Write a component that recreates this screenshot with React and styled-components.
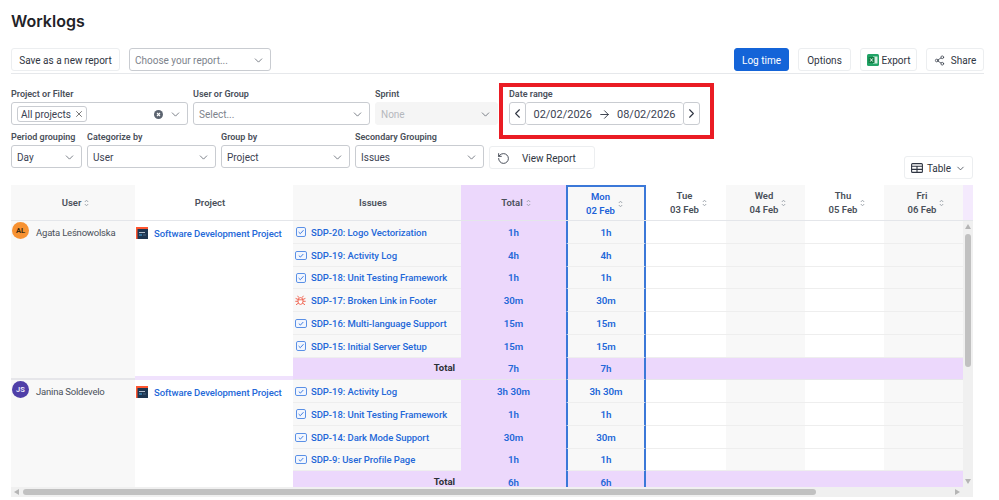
import styled, { createGlobalStyle } from 'styled-components'
import { ChevronDown, ChevronLeft, ChevronRight, ArrowRight, Share2, RotateCcw, X } from 'lucide-react'

const GlobalStyle = createGlobalStyle`
  html, body { margin: 0; padding: 0; background: #fff; }
  body {
    font-family: Roboto, "Noto Sans", sans-serif;
    font-size: 10px;
    color: #3b4252;
    overflow: hidden;
  }
  svg { flex: none; }
`

const COLUMNS = '124px 158px 168px 105px 80px 80px 79px 79px 79px'
const ROW = 22.75

const groups = [
  {
    user: 'Agata Leśnowolska',
    initials: 'AL',
    color: '#f79232',
    ink: '#3b2a10',
    total: '7h',
    issues: [
      { name: 'SDP-20: Logo Vectorization', time: '1h' },
      { name: 'SDP-19: Activity Log', time: '4h', wide: true },
      { name: 'SDP-18: Unit Testing Framework', time: '1h' },
      { name: 'SDP-17: Broken Link in Footer', time: '30m', bug: true },
      { name: 'SDP-16: Multi-language Support', time: '15m', wide: true },
      { name: 'SDP-15: Initial Server Setup', time: '15m' },
    ],
  },
  {
    user: 'Janina Soldevelo',
    initials: 'JS',
    color: '#4f3fa8',
    ink: '#e8e4f8',
    total: '6h',
    issues: [
      { name: 'SDP-19: Activity Log', time: '3h 30m', wide: true },
      { name: 'SDP-18: Unit Testing Framework', time: '1h' },
      { name: 'SDP-14: Dark Mode Support', time: '30m', wide: true },
      { name: 'SDP-9: User Profile Page', time: '1h', wide: true },
    ],
  },
]

const days = [
  { day: 'Tue', date: '03 Feb' },
  { day: 'Wed', date: '04 Feb', shaded: true },
  { day: 'Thu', date: '05 Feb' },
  { day: 'Fri', date: '06 Feb', shaded: true },
]

export default function App() {
  return (
    <Page>
      <GlobalStyle />
      <Title>Worklogs</Title>
      <Toolbar>
        <Button $width={109}>Save as a new report</Button>
        <SelectBox $width={142} $muted>
          Choose your report...
          <Caret />
        </SelectBox>
        <ToolbarRight>
          <PrimaryButton>Log time</PrimaryButton>
          <Button $width={53}>Options</Button>
          <Button $width={57} $gap={3}>
            <ExcelIcon />
            Export
          </Button>
          <Button $width={58} $gap={6}>
            <Share2 size={11} strokeWidth={1.6} color="#2f3542" />
            Share
          </Button>
        </ToolbarRight>
      </Toolbar>

      <FilterRow>
        <Field>
          <Label>Project or Filter</Label>
          <SelectBox $width={177}>
            <Chip>
              All projects
              <X size={10} strokeWidth={1.6} color="#333" />
            </Chip>
            <ClearIcon />
            <Caret tight />
          </SelectBox>
        </Field>
        <Field>
          <Label>User or Group</Label>
          <SelectBox $width={177} $muted>
            Select...
            <Caret />
          </SelectBox>
        </Field>
        <Field>
          <Label>Sprint</Label>
          <DisabledBox>
            None
            <Caret />
          </DisabledBox>
        </Field>
        <DateField>
          <Highlight />
          <Label>Date range</Label>
          <DateControls>
            <DateStep>
              <ChevronLeft size={15} strokeWidth={1.7} color="#2f3542" />
            </DateStep>
            <DateValue>
              02/02/2026
              <ArrowRight size={13} strokeWidth={1.7} color="#2f3542" />
              08/02/2026
            </DateValue>
            <DateStep>
              <ChevronRight size={15} strokeWidth={1.7} color="#2f3542" />
            </DateStep>
          </DateControls>
        </DateField>
      </FilterRow>

      <GroupingRow>
        <Field>
          <Label>Period grouping</Label>
          <SelectBox $width={71}>
            Day
            <Caret />
          </SelectBox>
        </Field>
        <Field>
          <Label>Categorize by</Label>
          <SelectBox $width={129}>
            User
            <Caret />
          </SelectBox>
        </Field>
        <Field>
          <Label>Group by</Label>
          <SelectBox $width={129}>
            Project
            <Caret />
          </SelectBox>
        </Field>
        <Field>
          <Label>Secondary Grouping</Label>
          <SelectBox $width={129}>
            Issues
            <Caret />
          </SelectBox>
        </Field>
        <ViewReport>
          <RotateCcw size={13} strokeWidth={1.6} color="#2f3542" />
          View Report
        </ViewReport>
        <TableToggle>
          <TableIcon />
          Table
          <ChevronDown size={11} strokeWidth={1.6} color="#2f3542" />
        </TableToggle>
      </GroupingRow>

      <TableFrame>
        <HeaderRow>
          <HeadCell $shaded>
            User
            <SortIcon />
          </HeadCell>
          <HeadCell $offset={8}>Project</HeadCell>
          <HeadCell $shaded $offset={8}>Issues</HeadCell>
          <HeadCell $total>
            Total
            <SortIcon />
          </HeadCell>
          <HeadCell $shaded $today $offset={8}>
            <DayLabel $today>
              <span>Mon</span>
              <span>02 Feb</span>
            </DayLabel>
            <SortIcon />
          </HeadCell>
          {days.map(d => (
            <HeadCell key={d.day} $shaded={d.shaded}>
              <DayLabel>
                <span>{d.day}</span>
                <span>{d.date}</span>
              </DayLabel>
              <SortIcon />
            </HeadCell>
          ))}
        </HeaderRow>
        <HeaderEnd />

        <Body>
          {groups.map(group => (
            <Group key={group.user} $rows={group.issues.length + 1}>
              <UserCell $rows={group.issues.length + 1}>
                <Avatar $color={group.color} $ink={group.ink}>{group.initials}</Avatar>
                {group.user}
              </UserCell>
              <ProjectCell $rows={group.issues.length + 1}>
                <ProjectIcon />
                <IssueLink>Software Development Project</IssueLink>
              </ProjectCell>
              {group.issues.map(issue => (
                <IssueRow key={issue.name} issue={issue} />
              ))}
              <TotalLabel>Total</TotalLabel>
              <TotalValue>{group.total}</TotalValue>
              <TotalValue $today>{group.total}</TotalValue>
              <TotalValue />
              <TotalValue />
              <TotalValue />
              <TotalValue />
            </Group>
          ))}
        </Body>

        <VerticalBar>
          <Arrow $dir="up" />
          <VerticalThumb />
          <Arrow $dir="down" />
        </VerticalBar>
        <HorizontalBar>
          <Arrow $dir="left" />
          <HorizontalThumb />
          <Arrow $dir="right" />
        </HorizontalBar>
      </TableFrame>
    </Page>
  )
}

function IssueRow({ issue }) {
  return (
    <>
      <IssueCell>
        {issue.bug ? <BugIcon /> : <TaskIcon wide={issue.wide} />}
        <IssueLink>{issue.name}</IssueLink>
      </IssueCell>
      <TimeCell $total>{issue.time}</TimeCell>
      <TimeCell $today $shaded>{issue.time}</TimeCell>
      <TimeCell />
      <TimeCell $shaded />
      <TimeCell />
      <TimeCell $shaded />
    </>
  )
}

const Caret = ({ tight }) => (
  <CaretSlot $tight={tight}>
    <ChevronDown size={13} strokeWidth={1.4} color="#555b66" />
  </CaretSlot>
)

const SortIcon = () => (
  <SortSlot>
    <svg width="5" height="8" viewBox="0 0 5 8">
      <path d="M.8 3 2.5 1.2 4.2 3M.8 5 2.5 6.8 4.2 5" fill="none" stroke="#9aa0a8" strokeWidth=".9" />
    </svg>
  </SortSlot>
)

const ClearIcon = () => (
  <ClearSvg width="9" height="9" viewBox="0 0 9 9">
    <circle cx="4.5" cy="4.5" r="4.5" fill="#5c6470" />
    <path d="M3 3l3 3M6 3 3 6" stroke="#fff" strokeWidth="1.1" />
  </ClearSvg>
)

const ExcelIcon = () => (
  <svg width="12" height="12" viewBox="0 0 12 12">
    <rect width="12" height="12" rx="1.5" fill="#21a366" />
    <rect x="6" y="2.5" width="4.5" height="7" fill="#d5f0e2" />
    <rect x="1.5" y="3" width="6" height="6" rx=".6" fill="#107c41" />
    <path d="M3.2 4.4 5.8 7.6M5.8 4.4 3.2 7.6" stroke="#fff" strokeWidth=".9" />
  </svg>
)

const TableIcon = () => (
  <svg width="12" height="10" viewBox="0 0 12 10">
    <rect x=".6" y=".6" width="10.8" height="8.8" rx="1" fill="none" stroke="#2f3542" strokeWidth="1.1" />
    <path d="M.6 3.3h10.8M.6 6.4h10.8M6 3.3v6" fill="none" stroke="#2f3542" strokeWidth="1.1" />
  </svg>
)

const TaskIcon = ({ wide }) => (
  <IconSlot>
    <svg width={wide ? 12 : 10} height={wide ? 9 : 10} viewBox={wide ? '0 0 12 9' : '0 0 10 10'}>
      <rect x=".5" y=".5" width={wide ? 11 : 9} height={wide ? 8 : 9} rx="1.4" fill="#f2f6fe" stroke="#5a90e6" />
      <path d={wide ? 'M3.8 4.6 5.4 6.1 8.3 3' : 'M2.6 5 4.3 6.7 7.5 3.2'} fill="none" stroke="#2f72dc" strokeWidth=".9" />
    </svg>
  </IconSlot>
)

const BugIcon = () => (
  <IconSlot>
    <svg width="11" height="11" viewBox="0 0 11 11">
      <ellipse cx="5.5" cy="6" rx="2.6" ry="3.4" fill="#fff" stroke="#ee5a46" strokeWidth=".9" />
      <path
        d="M3.8 2.6 2.6.8M7.2 2.6 8.4.8M3 4.4.6 3.4M8 4.4l2.4-1M2.9 6.3H.3M8.1 6.3h2.6M3.3 8.2 1 9.8M7.7 8.2 10 9.8M3 4.8h5"
        fill="none"
        stroke="#ee5a46"
        strokeWidth=".9"
      />
    </svg>
  </IconSlot>
)

const ProjectIcon = () => (
  <svg width="12" height="12" viewBox="0 0 12 12">
    <rect width="12" height="12" fill="#ff5630" />
    <rect x="1.5" y="2" width="10.5" height="10" fill="#1d3550" />
    <path d="M3 5.5h6" stroke="#d8e2ee" strokeWidth=".8" />
    <path d="M3 8h3" stroke="#4bb0e8" strokeWidth="1" />
    <path d="M7 8h3" stroke="#4a6480" strokeWidth="1" />
  </svg>
)

const Page = styled.div`
  height: 500px;
  overflow: hidden;
  padding: 0 15px 0 11px;
  box-sizing: border-box;
`

const Title = styled.h1`
  margin: 0;
  height: 48px;
  padding-top: 10px;
  box-sizing: border-box;
  font-family: "Inter", "Liberation Sans", sans-serif;
  font-size: 16px;
  line-height: 22px;
  font-weight: 600;
  color: #1f2328;
`

const Toolbar = styled.div`
  display: flex;
  gap: 9px;
  height: 26px;
  padding-bottom: 2px;
  border-bottom: 1px solid #e6e8eb;
  box-sizing: border-box;
`

const ToolbarRight = styled.div`
  display: flex;
  gap: 9px;
  margin-left: auto;
`

const Button = styled.button`
  display: inline-flex;
  align-items: center;
  justify-content: center;
  gap: ${p => p.$gap || 4}px;
  ${p => (p.$width ? `width: ${p.$width}px;` : '')}
  height: 23px;
  padding: 1px 0 0;
  box-sizing: border-box;
  border: 1px solid #eceef0;
  border-radius: 3px;
  background: #fff;
  font: inherit;
  white-space: nowrap;
  color: #2f3542;
`

const PrimaryButton = styled(Button)`
  width: 55px;
  border-color: #1464d8;
  background: #1464d8;
  color: #fff;
`

const SelectBox = styled.div`
  display: flex;
  align-items: center;
  width: ${p => p.$width}px;
  height: 23px;
  padding: 1px 0 0 5px;
  box-sizing: border-box;
  border: 1px solid #c9ccd1;
  border-radius: 3px;
  background: #fff;
  white-space: nowrap;
  color: ${p => (p.$muted ? '#7d838c' : '#3b4252')};
`

const CaretSlot = styled.span`
  display: inline-flex;
  margin-left: ${p => (p.$tight ? '6px' : 'auto')};
  margin-right: 5.5px;
`

const Chip = styled.span`
  display: inline-flex;
  align-items: center;
  gap: 3px;
  height: 14px;
  padding: 0 2px 0 3px;
  border: 1px solid #c9ccd1;
  border-radius: 3px;
  color: #3b4252;
`

const ClearSvg = styled.svg`
  margin-left: auto;
`

const FilterRow = styled.div`
  display: flex;
  gap: 5px;
  height: 38px;
  margin-top: 13px;
`

const GroupingRow = styled.div`
  display: flex;
  gap: 5px;
  height: 49px;
  margin-top: 5px;
  padding-right: 11px;
`

const Field = styled.div`
  display: flex;
  flex-direction: column;
`

const Label = styled.label`
  height: 13px;
  margin-bottom: 2px;
  font-size: 9px;
  line-height: 15px;
  font-weight: 600;
  color: #4a505a;
  white-space: nowrap;
`

const DisabledBox = styled(SelectBox)`
  width: 123px;
  border-color: #f5f5f5;
  background: #f5f5f5;
  color: #b5b8bd;
`

const DateField = styled(Field)`
  position: relative;
  margin-left: 6px;
`

const Highlight = styled.div`
  position: absolute;
  top: -4px;
  left: -10px;
  width: 215px;
  height: 56px;
  box-sizing: border-box;
  border: 4px solid #ea1c24;
  pointer-events: none;
`

const DateControls = styled.div`
  display: flex;
  height: 24px;
`

const DateStep = styled.div`
  display: flex;
  align-items: center;
  justify-content: center;
  width: 17px;
  box-sizing: border-box;
  border: 1px solid #c9ccd1;
  border-radius: 3px;
`

const DateValue = styled.div`
  display: flex;
  align-items: center;
  justify-content: center;
  gap: 6px;
  width: 157px;
  padding-top: 1px;
  box-sizing: border-box;
  border: 1px solid #c9ccd1;
  border-left: 0;
  border-right: 0;
  border-radius: 3px;
  font-size: 11px;
  color: #3b4252;
`

const ViewReport = styled(Button)`
  align-self: flex-start;
  width: 106px;
  margin-top: 16px;
  padding-left: 7px;
  justify-content: flex-start;
  gap: 12px;
`

const TableToggle = styled(Button)`
  align-self: flex-end;
  width: 69px;
  margin-left: auto;
`

const TableFrame = styled.div`
  display: grid;
  grid-template-columns: 952px 10px;
  grid-template-rows: 36px 266px 10px;
  width: 962px;
  margin-top: 6px;
`

const HeaderRow = styled.div`
  display: grid;
  grid-template-columns: ${COLUMNS};
  border-bottom: 1px solid #e4e6ea;
`

const HeaderEnd = styled.div`
  background: #f4eafd;
  border-bottom: 1px solid #e4e6ea;
`

const HeadCell = styled.div`
  display: flex;
  align-items: center;
  justify-content: center;
  padding-right: ${p => p.$offset || 0}px;
  box-sizing: border-box;
  font-size: 9.5px;
  font-weight: 600;
  color: #4a505a;
  background: ${p => (p.$total ? '#ecd8fc' : p.$shaded ? '#f8f8f8' : '#fff')};
  ${p => (p.$today ? 'border: 2px solid #3b78d8; border-bottom: 0;' : '')}
`

const SortSlot = styled.span`
  display: inline-flex;
  width: 0;
  margin-left: 3px;
`

const DayLabel = styled.div`
  display: flex;
  flex-direction: column;
  align-items: center;
  padding-top: 1px;
  line-height: 14px;
  color: ${p => (p.$today ? '#1d62d8' : '#4a505a')};
`

const Body = styled.div`
  overflow: hidden;
`

const Group = styled.div`
  display: grid;
  grid-template-columns: ${COLUMNS};
  grid-template-rows: repeat(${p => p.$rows}, ${ROW}px);
`

const UserCell = styled.div`
  grid-row: 1 / span ${p => p.$rows};
  display: flex;
  align-items: flex-start;
  gap: 7px;
  padding: 1px 0 0 1px;
  box-sizing: border-box;
  font-size: 9.5px;
  letter-spacing: -0.2px;
  line-height: 21px;
  color: #4a505a;
  background: #f8f8f8;
  border-bottom: 2px solid #e6e6ea;
`

const Avatar = styled.span`
  display: flex;
  align-items: center;
  justify-content: center;
  flex: none;
  width: 17px;
  height: 17px;
  border-radius: 50%;
  font-size: 7.5px;
  letter-spacing: 0;
  line-height: 17px;
  font-weight: 700;
  background: ${p => p.$color};
  color: ${p => p.$ink};
`

const ProjectCell = styled.div`
  grid-row: 1 / span ${p => p.$rows};
  display: flex;
  align-items: flex-start;
  gap: 6px;
  padding: 5.5px 0 0 1px;
  box-sizing: border-box;
  line-height: 13px;
  background: #fff;
  border-bottom: 4px solid #f0e2fd;
`

const IssueLink = styled.a`
  color: #2468d8;
  font-size: 9.5px;
  letter-spacing: -0.05px;
  font-weight: 500;
  line-height: 13px;
  white-space: nowrap;
`

const IssueCell = styled.div`
  display: flex;
  align-items: center;
  box-sizing: border-box;
  padding: 1px 0 0 1px;
  background: #f8f8f8;
  border-bottom: 1px solid #eeeeee;
`

const IconSlot = styled.span`
  display: inline-flex;
  justify-content: center;
  width: 13px;
  margin-right: 4px;
`

const TimeCell = styled.div`
  display: flex;
  align-items: center;
  justify-content: center;
  padding-top: 1px;
  box-sizing: border-box;
  font-size: 9.75px;
  font-weight: 600;
  color: #2468d8;
  background: ${p => (p.$total ? '#ecd8fc' : p.$shaded ? '#f8f8f8' : '#fff')};
  border-bottom: 1px solid ${p => (p.$total ? '#ecd8fc' : '#eeeeee')};
  ${p => (p.$today ? 'border-left: 2px solid #3b78d8; border-right: 2px solid #3b78d8;' : '')}
`

const TotalLabel = styled.div`
  display: flex;
  align-items: center;
  justify-content: flex-end;
  padding: 0 6px 1px 0;
  box-sizing: border-box;
  font-size: 9.5px;
  font-weight: 700;
  color: #2b2f36;
  background: #ecd8fc;
  border-bottom: 1px solid #e6e6ea;
`

const TotalValue = styled(TimeCell)`
  padding-top: 0;
  background: #ecd8fc;
  border-bottom-color: #e6e6ea;
`

const VerticalBar = styled.div`
  display: flex;
  flex-direction: column;
  align-items: center;
  padding: 3px 0;
  box-sizing: border-box;
  background: #f0f0f0;
`

const VerticalThumb = styled.div`
  width: 6px;
  height: 133px;
  margin-top: 5px;
  margin-bottom: auto;
  border-radius: 3px;
  background: #c1c1c1;
`

const HorizontalBar = styled.div`
  grid-column: 1 / span 2;
  display: flex;
  align-items: center;
  padding: 0 13px 0 3px;
  box-sizing: border-box;
  background: #f0f0f0;
`

const HorizontalThumb = styled.div`
  width: 793px;
  height: 6px;
  margin-left: 4px;
  margin-right: auto;
  border-radius: 3px;
  background: #c1c1c1;
`

const arrowBorders = {
  up: 'border-width: 0 3.5px 5px; border-color: transparent transparent #b5b5b5;',
  down: 'border-width: 5px 3.5px 0; border-color: #b5b5b5 transparent transparent;',
  left: 'border-width: 3.5px 5px 3.5px 0; border-color: transparent #b5b5b5 transparent transparent;',
  right: 'border-width: 3.5px 0 3.5px 5px; border-color: transparent transparent transparent #b5b5b5;',
}

const Arrow = styled.span`
  flex: none;
  width: 0;
  height: 0;
  border-style: solid;
  ${p => arrowBorders[p.$dir]}
`
